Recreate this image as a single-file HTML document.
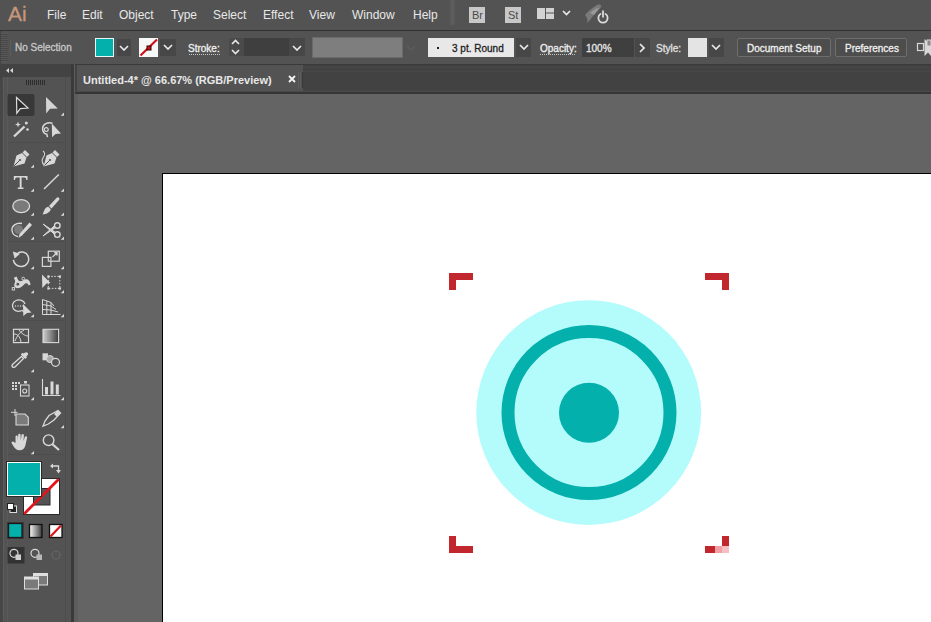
<!DOCTYPE html>
<html><head><meta charset="utf-8">
<style>
*{margin:0;padding:0;box-sizing:border-box}
html,body{width:931px;height:622px;overflow:hidden;background:#646464;font-family:"Liberation Sans",sans-serif}
.a{position:absolute}
.t{position:absolute;white-space:nowrap;color:#e6e6e6;line-height:1}
#menubar{left:0;top:0;width:931px;height:30px;background:#535353}
#mline{left:0;top:30px;width:931px;height:1px;background:#323232}
#opts{left:0;top:31px;width:931px;height:33px;background:#535353}
.m{font-size:12px;top:9px;color:#e8e8e8}
.o{font-size:10px;color:#e0e0e0;-webkit-text-stroke:0.3px currentColor}
.dd{position:absolute;background:#474747}
.chev{position:absolute;width:6px;height:6px;border-right:1.6px solid #e8e8e8;border-bottom:1.6px solid #e8e8e8;transform:rotate(45deg)}
#tabbar{left:75px;top:64px;width:856px;height:30px;background:#424242;border-top:1px solid #3a3a3a}
#tab{left:77px;top:65px;width:226px;height:28px;background:#535353}
#tabline{left:75px;top:91px;width:856px;height:3px;background:linear-gradient(#4a4a4a 0 1px,#353535 1px 3px)}
#tools{left:0;top:64px;width:72px;height:558px;background:#535353}
#toolshead{left:0;top:64px;width:72px;height:13px;background:#434343}
#tdiv{left:71px;top:64px;width:3px;height:558px;background:#3a3a3a}
#tdiv2{left:74px;top:64px;width:4px;height:558px;background:#5d5d5d}
#artboard{left:162px;top:173px;width:800px;height:500px;background:#fff;border:1px solid #000}
</style></head><body>
<!-- menu bar -->
<div id="menubar" class="a"></div>
<div class="t" style="left:8px;top:3px;font-size:21px;color:#c6987a;letter-spacing:0px;-webkit-text-stroke:0.3px #c6987a">Ai</div>
<div class="t m" style="left:47px">File</div>
<div class="t m" style="left:82px">Edit</div>
<div class="t m" style="left:119px">Object</div>
<div class="t m" style="left:171px">Type</div>
<div class="t m" style="left:213px">Select</div>
<div class="t m" style="left:263px">Effect</div>
<div class="t m" style="left:309px">View</div>
<div class="t m" style="left:352px">Window</div>
<div class="t m" style="left:413px">Help</div>
<div class="a" style="left:449px;top:0;width:7px;height:25px;background:linear-gradient(90deg,#535353,#5b5b5b 35%,#5e5e5e 50%,#5b5b5b 65%,#535353)"></div>
<div class="a" style="left:469px;top:7px;width:16px;height:16px;background:#c8c8c8"></div>
<div class="t" style="left:472px;top:10px;font-size:11px;color:#4a4a4a">Br</div>
<div class="a" style="left:505px;top:7px;width:16px;height:16px;background:#c8c8c8"></div>
<div class="t" style="left:508px;top:10px;font-size:11px;color:#4a4a4a">St</div>
<svg class="a" style="left:530px;top:0" width="90" height="30">
<g fill="#d2d2d2"><rect x="7" y="8" width="8" height="11"/><rect x="16" y="8" width="8" height="4.5"/><rect x="16" y="13.5" width="8" height="5.5"/></g>
<polyline points="33,11 36.5,14.5 40,11" fill="none" stroke="#e8e8e8" stroke-width="1.7"/>
<path d="M55,15 C58,11 62,8 67,5 C70,4 72,5 71,7 C69,10 66,13 63,16 C61,19 59,21 57,23 C58,20 57,17 55,15 Z" fill="#7a7a7a"/>
<path d="M60,13 C63,10 66,8 69,8 L64,15 Z" fill="#999"/>
<circle cx="73" cy="18" r="4.6" fill="none" stroke="#dcdcdc" stroke-width="1.8"/>
<line x1="73" y1="10.5" x2="73" y2="17.5" stroke="#535353" stroke-width="3.5"/>
<line x1="73" y1="10.5" x2="73" y2="17.5" stroke="#dcdcdc" stroke-width="1.8"/>
</svg>
<div id="mline" class="a"></div>
<!-- options bar -->
<div id="opts" class="a"></div>
<div class="a" style="left:0;top:31px;width:1px;height:33px;background:#444"></div><div class="a" style="left:1px;top:33px;width:7px;height:29px;background:repeating-linear-gradient(#5a5a5a 0 1px,#444 1px 2px);opacity:.85"></div><div class="a" style="left:10px;top:40px;width:1px;height:16px;background:#5c5c5c"></div>
<div class="t o" style="left:15px;top:43px;color:#c8c8c8">No Selection</div>
<div class="a" style="left:95px;top:38px;width:19px;height:19px;background:#04b0ac;border:1px solid #e8f8f8"></div>
<div class="dd" style="left:117px;top:39px;width:14px;height:17px"></div>
<svg class="a" style="left:119px;top:45px" width="10" height="6"><polyline points="1,1 5,5 9,1" fill="none" stroke="#e8e8e8" stroke-width="1.7"/></svg>
<div class="a" style="left:139px;top:38px;width:19px;height:19px;background:#f6f8f8"></div>
<svg class="a" style="left:139px;top:38px" width="19" height="19"><line x1="1.5" y1="17.5" x2="18" y2="1.5" stroke="#d0101a" stroke-width="2.2"/><rect x="8" y="8" width="4" height="4" fill="#d0101a" stroke="#300" stroke-width="1"/></svg>
<div class="dd" style="left:160px;top:39px;width:16px;height:17px"></div>
<svg class="a" style="left:163px;top:44px" width="10" height="6"><polyline points="1,1 5,5 9,1" fill="none" stroke="#e8e8e8" stroke-width="1.7"/></svg>
<div class="t o" style="left:188px;top:44px;color:#f0f0f0">Stroke:</div>
<div class="a" style="left:189px;top:54px;width:31px;height:1px;background:repeating-linear-gradient(90deg,#c8c8c8 0 1px,transparent 1px 2px)"></div>
<div class="dd" style="left:229px;top:38px;width:15px;height:18px;background:#4a4a4a"></div>
<svg class="a" style="left:231px;top:39px" width="9" height="16"><polyline points="1,5 4.5,1.5 8,5" fill="none" stroke="#e8e8e8" stroke-width="1.6"/><polyline points="1,11 4.5,14.5 8,11" fill="none" stroke="#e8e8e8" stroke-width="1.6"/></svg>
<div class="a" style="left:244px;top:38px;width:45px;height:18px;background:#3f3f3f"></div>
<div class="dd" style="left:289px;top:38px;width:16px;height:18px;background:#474747"></div>
<svg class="a" style="left:292px;top:45px" width="10" height="6"><polyline points="1,1 5,5 9,1" fill="none" stroke="#e8e8e8" stroke-width="1.7"/></svg>
<div class="a" style="left:312px;top:37px;width:91px;height:21px;background:#7e7e7e;border:1px solid #6a6a6a"></div>
<svg class="a" style="left:406px;top:45px" width="10" height="6"><polyline points="1,1 5,5 9,1" fill="none" stroke="#5c5c5c" stroke-width="1.7"/></svg>
<div class="a" style="left:428px;top:38px;width:86px;height:19px;background:#e8e8e8"></div>
<div class="a" style="left:437px;top:47px;width:2px;height:2px;background:#222"></div>
<div class="t o" style="left:452px;top:44px;color:#1e1e1e">3 pt. Round</div>
<div class="dd" style="left:516px;top:38px;width:15px;height:19px"></div>
<svg class="a" style="left:519px;top:44px" width="10" height="6"><polyline points="1,1 5,5 9,1" fill="none" stroke="#e8e8e8" stroke-width="1.7"/></svg>
<div class="t o" style="left:540px;top:44px;color:#f0f0f0">Opacity:</div>
<div class="a" style="left:540px;top:54px;width:36px;height:1px;background:repeating-linear-gradient(90deg,#c8c8c8 0 1px,transparent 1px 2px)"></div>
<div class="a" style="left:582px;top:38px;width:52px;height:19px;background:#3f3f3f"></div>
<div class="t o" style="left:586px;top:44px;color:#e8e8e8">100%</div>
<div class="dd" style="left:635px;top:38px;width:15px;height:19px"></div>
<svg class="a" style="left:639px;top:43px" width="6" height="10"><polyline points="1,1 5,5 1,9" fill="none" stroke="#e8e8e8" stroke-width="1.7"/></svg>
<div class="t o" style="left:656px;top:44px;color:#e2e2e2">Style:</div>
<div class="a" style="left:688px;top:38px;width:19px;height:19px;background:#e4e4e4"></div>
<div class="dd" style="left:709px;top:38px;width:15px;height:19px"></div>
<svg class="a" style="left:711px;top:44px" width="10" height="6"><polyline points="1,1 5,5 9,1" fill="none" stroke="#e8e8e8" stroke-width="1.7"/></svg>
<div class="a" style="left:737px;top:38px;width:94px;height:19px;background:#4d4d4d;border:1px solid #6e6e6e;border-radius:2px"></div>
<div class="t o" style="left:747px;top:44px;color:#f0f0f0">Document Setup</div>
<div class="a" style="left:835px;top:38px;width:72px;height:19px;background:#4d4d4d;border:1px solid #6e6e6e;border-radius:2px"></div>
<div class="t o" style="left:845px;top:44px;color:#f0f0f0">Preferences</div>
<svg class="a" style="left:910px;top:34px" width="21" height="28">
<rect x="7.5" y="9.5" width="6" height="7" fill="none" stroke="#d8d8d8" stroke-width="1.2"/>
<path d="M14.5,5 L21,11 L21,22 L18,18.5 L14.5,22 Z" fill="#d8d8d8"/>
<rect x="17" y="6" width="4" height="6" fill="#8a8a8a" stroke="#d8d8d8" stroke-width="1"/>
</svg>
<div id="tools" class="a"></div>
<div class="a" style="left:0;top:64px;width:3px;height:558px;background:#474747"></div>
<div class="a" style="left:3px;top:77px;width:1px;height:545px;background:#5c5c5c"></div>
<div class="a" style="left:7px;top:77px;width:1px;height:545px;background:#5a5a5a"></div>
<div class="a" style="left:65px;top:77px;width:1px;height:545px;background:#4d4d4d"></div>
<div id="toolshead" class="a"></div>
<div id="tdiv" class="a"></div>
<div id="tdiv2" class="a"></div>
<svg class="a" style="left:0;top:0" width="75" height="622">
<g fill="#d8d8d8"><path d="M6,70.5 L9,68 L9,73 Z"/><path d="M10,70.5 L13,68 L13,73 Z"/></g>
<g stroke="#2e2e2e" stroke-width="1"><line x1="26.5" y1="80" x2="26.5" y2="85"/><line x1="28.5" y1="80" x2="28.5" y2="85"/><line x1="30.5" y1="80" x2="30.5" y2="85"/><line x1="32.5" y1="80" x2="32.5" y2="85"/><line x1="34.5" y1="80" x2="34.5" y2="85"/><line x1="36.5" y1="80" x2="36.5" y2="85"/><line x1="38.5" y1="80" x2="38.5" y2="85"/><line x1="40.5" y1="80" x2="40.5" y2="85"/><line x1="42.5" y1="80" x2="42.5" y2="85"/><line x1="44.5" y1="80" x2="44.5" y2="85"/></g>
<g fill="#4d4d4d"><rect x="8" y="142" width="57" height="1"/><rect x="8" y="241" width="57" height="1"/><rect x="8" y="320" width="57" height="1"/><rect x="8" y="454" width="57" height="1"/></g>
<rect x="7.5" y="94" width="27" height="22" rx="2" fill="#383838"/>
<!-- selection -->
<path d="M16.5,97.5 L28,108 L20.3,108.6 L16.8,113.2 Z" fill="#2a2a2a" stroke="#dcdcdc" stroke-width="1.2" stroke-linejoin="miter"/>
<path d="M46,97 L57.8,108.4 L50,108.8 L46.2,113.4 Z" fill="#d4d4d4"/>
<!-- magic wand -->
<line x1="14" y1="136.5" x2="24.5" y2="126.5" stroke="#d8d8d8" stroke-width="2.4"/>
<path d="M18,121.5 L18.8,123.8 L21,124.5 L18.8,125.3 L18,127.5 L17.2,125.3 L15,124.5 L17.2,123.8 Z" fill="#d8d8d8"/>
<circle cx="26.3" cy="123" r="1.5" fill="#d8d8d8"/><circle cx="27.5" cy="129.5" r="1.3" fill="#d8d8d8"/>
<!-- lasso -->
<path d="M52.5,123.2 C47,121.8 42.5,124.5 42.6,128.8 C42.7,132 44.5,133.8 46.8,134.2 L47.5,137.2" fill="none" stroke="#d8d8d8" stroke-width="1.5"/>
<circle cx="46.3" cy="129.6" r="1.9" fill="none" stroke="#d8d8d8" stroke-width="1.2"/>
<path d="M51.8,123.6 L61,133.6 L55.5,133.9 L52.1,137.3 Z" fill="#d8d8d8"/>
<!-- pen -->
<path d="M25,150 L29.5,154.5 L27,157 L22.5,152.5 Z" fill="#d8d8d8"/>
<path d="M22,153 L26.5,157.5 L24.5,163.5 L13.5,166.5 L16.5,155.5 Z" fill="#d8d8d8"/>
<path d="M13.8,166.2 L19.5,160.5" stroke="#535353" stroke-width="1"/><circle cx="20" cy="160" r="1.1" fill="#535353"/>
<!-- curvature pen -->
<path d="M55,150 L59.5,154.5 L57,157 L52.5,152.5 Z" fill="#d8d8d8"/>
<path d="M52,153 L56.5,157.5 L54.5,163.5 L43.5,166.5 L46.5,155.5 Z" fill="#d8d8d8"/>
<path d="M43.8,166.2 L49.5,160.5" stroke="#535353" stroke-width="1"/><circle cx="50" cy="160" r="1.1" fill="#535353"/>
<path d="M44.5,165.5 C41,162 42,159 43.5,157 C45,155 45,152.5 43,151" fill="none" stroke="#d8d8d8" stroke-width="1.1"/>
<!-- type -->
<path d="M13.8,176 L27.5,176 L27.5,180 L26.3,180 C26,177.8 25.5,177.6 23.5,177.6 L21.6,177.6 L21.6,187.4 L23.5,187.6 L23.5,189 L17.8,189 L17.8,187.6 L19.7,187.4 L19.7,177.6 L17.8,177.6 C15.8,177.6 15.3,177.8 15,180 L13.8,180 Z" fill="#d8d8d8"/>
<!-- line -->
<line x1="44" y1="189" x2="58.8" y2="174.5" stroke="#d8d8d8" stroke-width="1.5"/>
<!-- ellipse -->
<ellipse cx="21.2" cy="206.1" rx="8.4" ry="6.5" fill="#7a7a7a" stroke="#d8d8d8" stroke-width="1.3"/>
<!-- paintbrush -->
<path d="M58.5,197.5 C59.5,198.2 59.8,199 59,200 L51.5,208.5 L49,206 L56.5,198 C57.2,197.3 57.8,197.1 58.5,197.5 Z" fill="#d8d8d8"/>
<path d="M48.3,206.8 L50.8,209.3 C50,212.5 46,214.5 42.5,214.5 C43.5,213 43.7,211 45,209 C46,207.5 47.3,207 48.3,206.8 Z" fill="#d8d8d8"/>
<!-- shaper -->
<path d="M22,223.5 C16,222.5 11.5,226 12,230.5 C12.5,234 15,236 18,236.5" fill="none" stroke="#d8d8d8" stroke-width="1.4"/>
<circle cx="18.5" cy="229.5" r="4.5" fill="#7a7a7a"/>
<path d="M29.5,222.5 L32,225 L22,235.5 L18.5,238 L19.5,234 Z" fill="#d8d8d8"/>
<!-- scissors -->
<g fill="none" stroke="#d8d8d8" stroke-width="1.4"><circle cx="57.3" cy="225.5" r="2.8"/><circle cx="57.3" cy="234.6" r="2.8"/></g>
<path d="M43,224 L55.2,232.2 L54,233.8 Z M43,236 L55.2,227.8 L54,226.2 Z" fill="#d8d8d8" stroke="#d8d8d8" stroke-width="1"/>
<!-- rotate -->
<path d="M17.8,253.2 C21.5,251 26.5,252 28.2,256.5 C29.8,261 27,266.2 21.5,266.4 C17,266.6 13.8,263.6 13.4,259.8" fill="none" stroke="#d8d8d8" stroke-width="1.5"/>
<path d="M12.8,251.5 L20,253.8 L14.6,258.4 Z" fill="#d8d8d8"/>
<!-- scale -->
<g fill="none" stroke="#d8d8d8" stroke-width="1.2"><rect x="48.3" y="251.2" width="11" height="10"/><rect x="42.4" y="257.4" width="8.5" height="9"/></g>
<path d="M52.5,257 L57,252.7 M54.2,252.7 L57,252.7 L57,255.5" fill="none" stroke="#d8d8d8" stroke-width="1.3"/>
<!-- warp -->
<path d="M13.8,277.8 L16.6,276.6 C17.6,279 18.2,281.2 20,281.2 C22,281.2 23.5,279.8 25.5,279.3 C27.8,278.8 29.8,280 30.6,284.5 L28.6,285.4 C27.8,283.2 26.8,282.6 25.2,283.6 C23.2,285.6 21,288.2 17.6,288.2 C14.2,288.2 13.4,285.2 15,282.6 C15.6,281.2 14.6,279.4 13.8,277.8 Z" fill="#d8d8d8"/>
<circle cx="17.8" cy="284.2" r="1.9" fill="#535353" stroke="#d8d8d8" stroke-width="0.9"/>
<circle cx="23.2" cy="278.6" r="1.4" fill="#535353" stroke="#d8d8d8" stroke-width="0.9"/>
<rect x="12.2" y="287.6" width="2.4" height="2.4" fill="none" stroke="#d8d8d8" stroke-width="0.9"/>
<!-- free transform -->
<rect x="48.3" y="276.4" width="11.5" height="12" fill="none" stroke="#d8d8d8" stroke-width="1" stroke-dasharray="1.5,1.5"/>
<g fill="#d8d8d8"><rect x="47.3" y="275.4" width="2.2" height="2.2"/><rect x="58.8" y="275.4" width="2.2" height="2.2"/><rect x="47.3" y="287.4" width="2.2" height="2.2"/><rect x="58.8" y="287.4" width="2.2" height="2.2"/></g>
<path d="M42,274.5 L50.5,283 L46.5,283.5 L42.3,288 Z" fill="#d8d8d8"/>
<!-- shape builder -->
<path d="M16,300.5 C12,302 11.5,307 14,309.5 C16,311.5 19.5,311.5 22,310.5 L24.5,312" fill="none" stroke="#d8d8d8" stroke-width="1.3"/>
<path d="M16,300.5 C19.5,299 24,300.5 25,304" fill="none" stroke="#d8d8d8" stroke-width="1.3"/>
<g fill="#d8d8d8"><circle cx="15.5" cy="306" r="0.7"/><circle cx="18" cy="306" r="0.7"/><circle cx="20.5" cy="306" r="0.7"/><circle cx="23" cy="306" r="0.7"/></g>
<path d="M23,304 L31.5,312.6 L27,313 L23.3,316 Z" fill="#d8d8d8"/>
<!-- perspective grid -->
<g fill="none" stroke="#d8d8d8" stroke-width="1"><path d="M42.5,299.5 L42.5,314.5 L60.5,314.5"/><path d="M42.5,299.5 L51,302.5 L51,314.5"/><path d="M42.5,304.5 L51,306"/><path d="M42.5,309.5 L51,310"/><path d="M46.8,300.8 L46.8,314.5"/><path d="M51,306 L56,309.5 M51,310 L58,312"/><path d="M51,302.5 L54,306"/></g>
<!-- mesh -->
<rect x="13.5" y="329.3" width="15" height="13.3" fill="none" stroke="#d8d8d8" stroke-width="1.2"/>
<path d="M15,341 C17,336 19,333 24,330 M14,334 C17,334 20,336 21,342 M19,330 C21,333 25,336 28,336" fill="none" stroke="#d8d8d8" stroke-width="1"/>
<!-- gradient -->
<defs><linearGradient id="gr" x1="0" x2="1"><stop offset="0" stop-color="#d0d0d0"/><stop offset="1" stop-color="#3c3c3c"/></linearGradient></defs>
<rect x="43" y="329.3" width="15.6" height="13.3" fill="url(#gr)" stroke="#d8d8d8" stroke-width="1.1"/>
<!-- eyedropper -->
<path d="M25.5,352.5 C27,351.8 28.5,353.2 28,354.8 L26.3,356.5 L27,357.3 L25.3,359 L20.8,354.5 L22.5,352.8 L23.3,353.5 Z" fill="#d8d8d8"/>
<path d="M21.5,356.5 L23.5,358.5 L15.5,366.5 C14.5,367.5 13,367.5 12.5,367 C12,366.5 12,365 13,364 Z" fill="none" stroke="#d8d8d8" stroke-width="1.3"/>
<!-- blend -->
<rect x="42.5" y="353.3" width="5.5" height="7" fill="#d8d8d8"/>
<circle cx="50" cy="359" r="3.5" fill="#a8a8a8" stroke="#d8d8d8" stroke-width="1"/>
<circle cx="55.5" cy="362.3" r="4" fill="#535353" stroke="#d8d8d8" stroke-width="1.2"/>
<!-- symbol sprayer -->
<g fill="#d8d8d8"><rect x="12" y="382" width="2" height="2"/><rect x="15" y="382" width="2" height="2"/><rect x="18" y="382" width="2" height="2"/><rect x="12" y="385" width="2" height="2"/><rect x="15" y="385" width="2" height="2"/><rect x="12" y="388" width="2" height="2"/><rect x="15" y="388" width="2" height="2"/><rect x="24" y="381" width="3" height="2.5"/></g>
<rect x="20.5" y="385" width="8.5" height="11" fill="none" stroke="#d8d8d8" stroke-width="1.1"/>
<circle cx="24.7" cy="391" r="2" fill="none" stroke="#d8d8d8" stroke-width="1.1"/>
<!-- graph -->
<path d="M42.5,379 L42.5,395.5 L60.5,395.5" fill="none" stroke="#d8d8d8" stroke-width="1.1"/>
<g fill="#d8d8d8"><rect x="45" y="387" width="3" height="7.5"/><rect x="50.5" y="381.5" width="3" height="13"/><rect x="55.8" y="384.5" width="3" height="10"/></g>
<!-- artboard -->
<path d="M11,412.3 L17.5,412.3 M15,409 L15,416" stroke="#d8d8d8" stroke-width="1"/>
<path d="M16,414 L25,414 L28.3,417.3 L28.3,425 L16,425 Z" fill="#7a7a7a" stroke="#d8d8d8" stroke-width="1.1"/>
<!-- slice -->
<path d="M58,410.5 L60.5,413 L54,420 L48.3,424 L43,426 L45,421 L49,415.5 Z" fill="none" stroke="#d8d8d8" stroke-width="1.3"/>
<path d="M54,414 L57.5,410.5 L60.5,413 L57,417 Z" fill="#d8d8d8"/>
<!-- hand -->
<path d="M15.5,443 L15.5,436.5 C15.5,435 17.8,435 17.8,436.5 L17.8,441 L18.2,435 C18.2,433.3 20.6,433.3 20.6,435 L20.8,440.5 L21.5,435 C21.7,433.5 24,433.8 23.9,435.5 L23.5,441 L24.8,437 C25.3,435.6 27.5,436.2 27.1,437.8 L25.5,445 C24.8,448.5 22.8,450.3 19.5,450.3 C16.5,450.3 14.8,448.5 13.5,446.3 L11.7,443.2 C11,442 12.5,440.8 13.5,441.8 Z" fill="#d8d8d8"/>
<!-- zoom -->
<circle cx="48.6" cy="440.2" r="5.3" fill="none" stroke="#d8d8d8" stroke-width="1.4"/>
<line x1="52.5" y1="444.2" x2="59" y2="450" stroke="#d8d8d8" stroke-width="2.2"/>
<!-- fill/stroke -->
<rect x="23.5" y="478.5" width="36" height="36" fill="#ffffff" stroke="#2a2a2a" stroke-width="1"/>
<rect x="33.5" y="488.5" width="16.5" height="16.5" fill="#535353" stroke="#2a2a2a" stroke-width="1"/>
<line x1="24.3" y1="513.7" x2="58.7" y2="479.3" stroke="#e0141c" stroke-width="2.8"/>
<rect x="6" y="461" width="36" height="36" fill="#2b2b2b"/>
<rect x="7" y="462" width="34" height="34" fill="#ffffff"/>
<rect x="8" y="463" width="32" height="32" fill="#04b0ac"/>
<!-- swap -->
<path d="M52,466 L58.5,466 L58.5,471" fill="none" stroke="#d8d8d8" stroke-width="1.3"/>
<path d="M50,466 L53,463.5 L53,468.5 Z M58.5,473.5 L56,470 L61,470 Z" fill="#d8d8d8"/>
<!-- default fill stroke -->
<rect x="10" y="506" width="6.5" height="6.5" fill="#222" stroke="#ddd" stroke-width="1"/>
<rect x="7.5" y="503.5" width="6" height="6" fill="#fff" stroke="#222" stroke-width="1"/>
<!-- color modes -->
<rect x="7" y="522" width="17" height="17" fill="#3c3c3c"/>
<rect x="8.5" y="523.5" width="13.5" height="14" fill="#04b0ac" stroke="#1a1a1a" stroke-width="1.3"/>
<defs><linearGradient id="gr2" x1="0" x2="1"><stop offset="0" stop-color="#fafafa"/><stop offset="1" stop-color="#3a3a3a"/></linearGradient></defs>
<rect x="29.5" y="524.5" width="12.5" height="13" fill="url(#gr2)" stroke="#111" stroke-width="1.3"/>
<rect x="49.5" y="524.5" width="12.5" height="13" fill="#ffffff" stroke="#111" stroke-width="1.3"/>
<line x1="50.5" y1="536.5" x2="61" y2="525.5" stroke="#e0141c" stroke-width="2.2"/>
<!-- draw modes -->
<rect x="7.5" y="547" width="17" height="16.5" fill="#333333"/>
<g fill="none" stroke="#d8d8d8" stroke-width="1.2"><circle cx="14" cy="553.3" r="4"/><circle cx="35" cy="553.3" r="4"/></g>
<rect x="15.5" y="554.5" width="5.5" height="5.5" fill="#cfcfcf"/>
<rect x="36.5" y="554.5" width="5.5" height="5.5" fill="#b8b8b8"/>
<circle cx="56" cy="555" r="4" fill="none" stroke="#666" stroke-width="1.2"/>
<!-- screen mode -->
<rect x="33.5" y="573.5" width="14" height="11.5" fill="#7a7a7a" stroke="#dedede" stroke-width="1"/>
<rect x="33.5" y="573.5" width="14" height="2.5" fill="#dedede"/>
<rect x="24.5" y="577" width="14" height="12" fill="#7a7a7a" stroke="#dedede" stroke-width="1"/>
<rect x="24.5" y="577" width="14" height="2.5" fill="#dedede"/>
<!-- corner triangles -->
<g fill="#d8d8d8">
<path d="M64,112.5 L64,115.8 L60.7,115.8 Z"/>
<path d="M34,164.5 L34,167.8 L30.7,167.8 Z"/>
<path d="M34,188.5 L34,191.8 L30.7,191.8 Z"/><path d="M64,188.5 L64,191.8 L60.7,191.8 Z"/>
<path d="M34,212.5 L34,215.8 L30.7,215.8 Z"/><path d="M64,212.5 L64,215.8 L60.7,215.8 Z"/>
<path d="M34,236.5 L34,239.8 L30.7,239.8 Z"/><path d="M64,236.5 L64,239.8 L60.7,239.8 Z"/>
<path d="M34,266 L34,269.3 L30.7,269.3 Z"/><path d="M64,266 L64,269.3 L60.7,269.3 Z"/>
<path d="M34,290 L34,293.3 L30.7,293.3 Z"/><path d="M64,290 L64,293.3 L60.7,293.3 Z"/>
<path d="M34,314 L34,317.3 L30.7,317.3 Z"/><path d="M64,314 L64,317.3 L60.7,317.3 Z"/>
<path d="M34,369 L34,372.3 L30.7,372.3 Z"/>
<path d="M34,397 L34,400.3 L30.7,400.3 Z"/><path d="M64,397 L64,400.3 L60.7,400.3 Z"/>
<path d="M64,425 L64,428.3 L60.7,428.3 Z"/>
<path d="M34,451 L34,454.3 L30.7,454.3 Z"/>
</g>
</svg>
<div id="tabbar" class="a"></div>
<div id="tab" class="a"></div>
<div id="tabline" class="a"></div>
<div class="a" style="left:298px;top:72px;width:1px;height:16px;background:#5e5e5e"></div>
<div class="a" style="left:300px;top:72px;width:1px;height:16px;background:#5e5e5e"></div>
<div class="a" style="left:302px;top:72px;width:1px;height:16px;background:#383838"></div>
<div class="a" style="left:303px;top:67px;width:628px;height:1px;background:#474747"></div>
<div class="a" style="left:303px;top:71px;width:628px;height:1px;background:#474747"></div>
<div class="t" style="left:83px;top:75px;font-size:11px;font-weight:bold;color:#e8e8e8">Untitled-4* @ 66.67% (RGB/Preview)</div>
<div id="artboard" class="a"></div>
<svg class="a" style="left:0;top:0" width="931" height="622">
<g fill="#c1272d">
<rect x="449" y="273" width="24" height="7"/><rect x="449" y="273" width="7" height="17"/>
<rect x="705" y="273" width="24" height="7"/><rect x="722" y="273" width="7" height="17"/>
<rect x="449" y="546" width="24" height="7"/><rect x="449" y="536" width="7" height="17"/>
<rect x="705" y="546" width="10" height="7"/><rect x="722" y="536" width="7" height="10"/>
</g>
<rect x="715" y="546" width="7" height="7" fill="#f0a0a4"/>
<rect x="722" y="546" width="7" height="7" fill="#f4c0c2"/>
<circle cx="588.7" cy="412.6" r="112.4" fill="#b4fbfb"/>
<circle cx="589" cy="412.6" r="81" fill="none" stroke="#04b0ac" stroke-width="13"/>
<circle cx="589" cy="412.7" r="30" fill="#04b0ac"/>
</svg>
<!-- tab close -->
<svg class="a" style="left:288px;top:75px" width="8" height="8"><path d="M1,1 L7,7 M7,1 L1,7" stroke="#f4f4f4" stroke-width="1.8"/></svg>

</body></html>
